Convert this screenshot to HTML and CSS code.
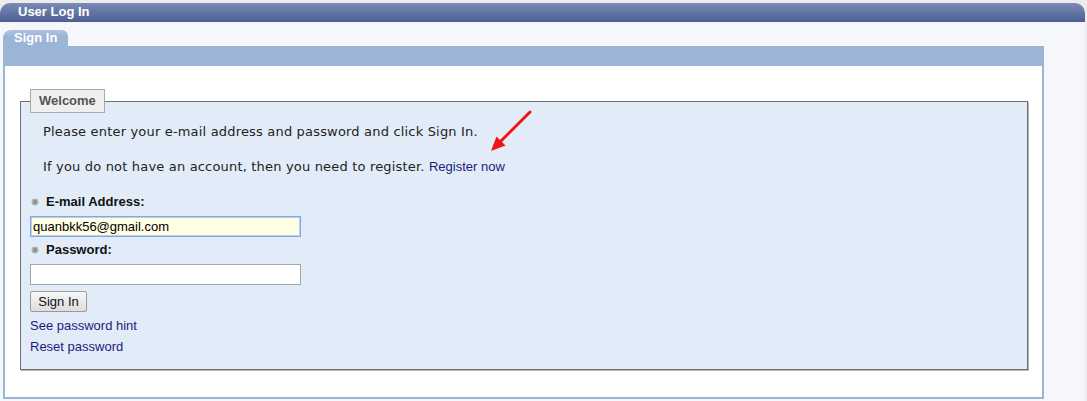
FILE: index.html
```html
<!DOCTYPE html>
<html>
<head>
<meta charset="utf-8">
<title>User Log In</title>
<link rel="stylesheet" href="styles.css">
</head>
<body>
<div class="page">
  <div class="header">User Log In</div>
  <div class="content">
    <div class="tabs"><div class="tab">Sign In</div></div>
    <div class="band"></div>
    <div class="panel">
      <fieldset class="welcome">
        <legend>Welcome</legend>
        <p class="intro">Please enter your e-mail address and password and click Sign In.</p>
        <p class="intro second">If you do not have an account, then you need to register. <a class="link" href="#">Register now</a></p>
        <div class="label first"><svg class="req" width="8" height="8" viewBox="0 0 8 8"><g stroke="#8a8a8a" stroke-width="1.3"><line x1="4" y1="0.5" x2="4" y2="7.5"/><line x1="0.5" y1="4" x2="7.5" y2="4"/><line x1="1.5" y1="1.5" x2="6.5" y2="6.5"/><line x1="6.5" y1="1.5" x2="1.5" y2="6.5"/></g></svg>E-mail Address:</div>
        <div class="field email">quanbkk56@gmail.com</div>
        <div class="label"><svg class="req" width="8" height="8" viewBox="0 0 8 8"><g stroke="#8a8a8a" stroke-width="1.3"><line x1="4" y1="0.5" x2="4" y2="7.5"/><line x1="0.5" y1="4" x2="7.5" y2="4"/><line x1="1.5" y1="1.5" x2="6.5" y2="6.5"/><line x1="6.5" y1="1.5" x2="1.5" y2="6.5"/></g></svg>Password:</div>
        <div class="field"></div>
        <div class="button">Sign In</div>
        <a class="link block first-link" href="#">See password hint</a>
        <a class="link block" href="#">Reset password</a>
      </fieldset>
      <svg class="arrow" width="50" height="52" viewBox="0 0 50 52">
        <line x1="45" y1="7" x2="15" y2="37" stroke="#f01414" stroke-width="3" stroke-linecap="round"/>
        <polygon points="6,46 20.5,40.5 11.5,31.5" fill="#f01414"/>
      </svg>
    </div>
  </div>
</div>
</body>
</html>
```
FILE: styles.css
```css
html, body {
  margin: 0;
  padding: 0;
}
body {
  background: #ececec;
  font-family: "Liberation Sans", Arial, sans-serif;
  font-size: 13px;
  color: #222;
}
.page {
  width: 1085px;
  height: 401px;
  padding-top: 3px;
  box-sizing: border-box;
  display: flex;
  flex-direction: column;
}
.header {
  height: 19px;
  line-height: 17px;
  border-radius: 10px 10px 0 0;
  background: linear-gradient(#7b8bb4, #4c5f94);
  color: #fff;
  font-weight: bold;
  font-size: 13px;
  padding-left: 18px;
}
.content {
  flex: 1;
  background: #f5f7fa;
  padding: 8px 41px 0 3px;
}
.tabs {
  display: flex;
}
.tab {
  width: 54px;
  height: 16px;
  line-height: 16px;
  padding-left: 11px;
  background: linear-gradient(#aec3de, #9cb5d6 40%);
  border-radius: 8px 6px 0 0;
  color: #fff;
  font-weight: bold;
  font-size: 13px;
}
.band {
  height: 20px;
  background: #9cb5d6;
}
.panel {
  position: relative;
  background: #fff;
  border: 2px solid #9cb5d6;
  border-top: 0;
  padding: 23px 14px 27px 15px;
}
.welcome {
  margin: 0;
  padding: 0 9px 14px 9px;
  border: 1px solid #6e6e6e;
  box-shadow: 1px 1px 0 #b8b8b8;
  background: #e2ecf8;
  min-width: 0;
}
.welcome legend {
  padding: 0 8px;
  height: 22px;
  line-height: 22px;
  background: #efefef;
  border: 1px solid #aaaaaa;
  color: #555;
  font-weight: bold;
  font-size: 13px;
}
.intro {
  margin: 11px 0 0 13px;
  font-family: "DejaVu Sans", Verdana, sans-serif;
  font-size: 13px;
  letter-spacing: 0.18px;
  line-height: 16px;
  color: #222;
}
.intro.second {
  margin-top: 19px;
}
.intro .link {
  font-family: "Liberation Sans", Arial, sans-serif;
  font-size: 13px;
  letter-spacing: 0;
}
.link {
  color: #1b1b7c;
  text-decoration: none;
}
.link.block {
  display: block;
  line-height: 16px;
  margin-top: 5px;
}
.label {
  display: flex;
  align-items: center;
  gap: 7px;
  padding-left: 1px;
  font-weight: bold;
  line-height: 16px;
  margin-top: 5px;
  color: #111;
}
.label.first {
  margin-top: 19px;
}
.req {
  flex: none;
}
.field {
  width: 271px;
  height: 21px;
  box-sizing: border-box;
  border: 1px solid #a6a6a6;
  background: #fff;
  margin-top: 6px;
  line-height: 19px;
  padding-left: 2px;
  color: #000;
}
.field.email {
  background: #fffde3;
  border-color: #84a8e4;
  box-shadow: inset 0 0 0 1px #b9cff0;
}
.button {
  width: 57px;
  height: 21px;
  box-sizing: border-box;
  margin-top: 6px;
  border: 1px solid #9a9a9a;
  border-radius: 2px;
  background: linear-gradient(#f7f7f7, #dddddd);
  text-align: center;
  line-height: 19px;
  color: #111;
}
.link.block.first-link {
  margin-top: 6px;
}
.arrow {
  position: absolute;
  left: 480px;
  top: 39px;
}
```
